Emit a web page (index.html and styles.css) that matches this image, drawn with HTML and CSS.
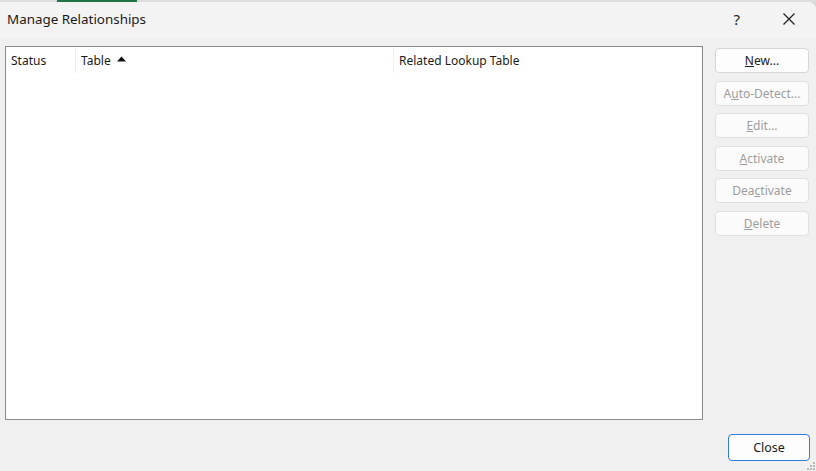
FILE: index.html
```html
<!DOCTYPE html>
<html>
<head>
<meta charset="utf-8">
<link rel="stylesheet" href="styles.css">
</head>
<body>
<div class="topstrip"><div class="greenbar"></div></div>
<div class="dialog">
  <div class="titlebar">
    <div class="title">Manage Relationships</div>
    <div class="tbtns">
      <span class="help">?</span>
      <svg class="close-x" width="14" height="14" viewBox="0 0 14 14"><path d="M1.5 1.5 L12.5 12.5 M12.5 1.5 L1.5 12.5" stroke="#222" stroke-width="1.3" fill="none"/></svg>
    </div>
  </div>
  <div class="body">
    <div class="list">
      <div class="header">
        <div class="col c1">Status</div>
        <div class="col c2">Table <svg class="sort" width="9" height="6" viewBox="0 0 9 6"><path d="M0 5.5 L4.5 0.5 L9 5.5 Z" fill="#111"/></svg></div>
        <div class="col c3">Related Lookup Table</div>
      </div>
    </div>
    <div class="side">
      <button class="btn"><u>N</u>ew...</button>
      <button class="btn dis">A<u>u</u>to-Detect...</button>
      <button class="btn dis"><u>E</u>dit...</button>
      <button class="btn dis"><u>A</u>ctivate</button>
      <button class="btn dis">Dea<u>c</u>tivate</button>
      <button class="btn dis"><u>D</u>elete</button>
    </div>
  </div>
  <div class="footer">
    <button class="closebtn">Close</button>
  </div>
  <svg class="grip" width="10" height="10" viewBox="0 0 10 10">
    <g fill="#b8b8b8">
      <rect x="7" y="1" width="2" height="2"/>
      <rect x="4" y="4" width="2" height="2"/><rect x="7" y="4" width="2" height="2"/>
      <rect x="1" y="7" width="2" height="2"/><rect x="4" y="7" width="2" height="2"/><rect x="7" y="7" width="2" height="2"/>
    </g>
  </svg>
</div>
</body>
</html>
```
FILE: styles.css
```css
* { box-sizing: border-box; }
html, body { margin: 0; padding: 0; }
body {
  width: 816px; height: 471px; overflow: hidden;
  background: #d9d9d9;
  font-family: "Noto Sans", "Open Sans", sans-serif;
  color: #1b1b1b;
  position: relative;
}
.topstrip { height: 2px; background: #dcdcdc; position: relative; }
.greenbar { position: absolute; left: 57px; width: 80px; top: 0; height: 2px; background: #217346; }
.dialog {
  position: absolute; left: 0; top: 2px; right: 0; bottom: 0;
  background: #f0f0f0;
  border-top-right-radius: 8px;
  display: flex; flex-direction: column;
}
.titlebar {
  height: 36px; display: flex; align-items: center; justify-content: space-between;
  padding: 0 0 0 7px; background: #f3f3f3;
  border-top-right-radius: 8px;
}
.title { font-size: 13.4px; color: #1a1a1a; margin-top: -2px; }
.tbtns { display: flex; align-items: center; margin-right: 20px; margin-top: -2px; }
.help { font-size: 15px; margin-right: 42px; color: #222; }
.close-x { display: block; }
.body { display: flex; padding: 8px 6px 0 5px; gap: 12px; }
.list {
  width: 698px; height: 374px; background: #fff;
  border: 1px solid #8a8a8a;
}
.header { display: flex; height: 26px; margin-top: 1px; font-size: 12px; }
.col { display: flex; align-items: center; padding-left: 5px; border-right: 1px solid #efefef; height: 25px; }
.c1 { width: 70px; }
.c2 { width: 318px; gap: 6px; }
.c3 { border-right: none; flex: 1; }
.sort { margin-top: -3px; }
.side { display: flex; flex-direction: column; gap: 7.5px; margin-top: 2px; }
.btn {
  width: 94px; height: 25px; background: #fdfdfd;
  border: 1px solid #d6d6d6; border-radius: 4px;
  font-family: inherit; font-size: 12px; color: #1b1b1b; padding: 0;
}
.btn.dis { color: #9d9d9d; border-color: #e0e0e0; background: #fbfbfb; }
.footer { display: flex; justify-content: flex-end; padding: 14px 6px 0 0; }
.closebtn {
  width: 82px; height: 27px; background: #fdfdfd;
  border: 1.5px solid #2e7dd6; border-radius: 4px;
  font-family: inherit; font-size: 12.5px; color: #1b1b1b; padding: 0;
}
.grip { position: absolute; right: 0; bottom: 0; }
```
